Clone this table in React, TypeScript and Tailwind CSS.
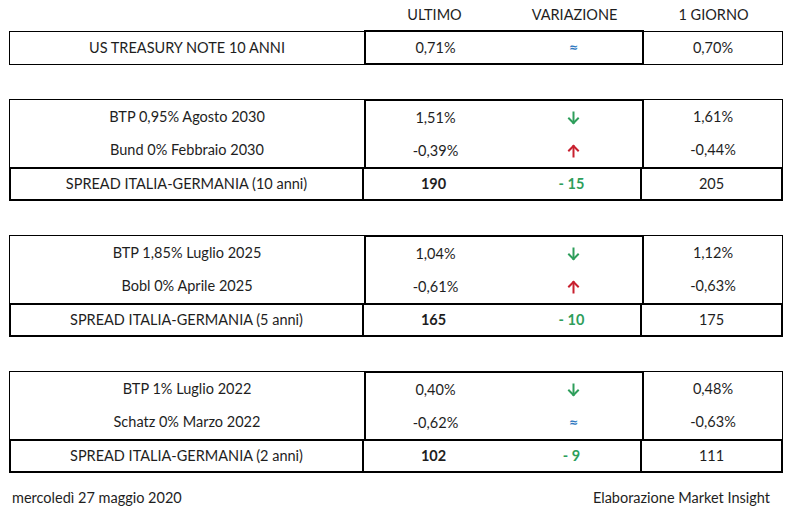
import React from "react";

type Row = { name: string; last: string; varType: "down" | "up" | "approx"; prev: string };
type Block = { rows: Row[]; spread: { name: string; last: string; delta: string; prev: string } };

const blocks: Block[] = [
  {
    rows: [
      { name: "BTP 0,95% Agosto 2030", last: "1,51%", varType: "down", prev: "1,61%" },
      { name: "Bund 0% Febbraio 2030", last: "-0,39%", varType: "up", prev: "-0,44%" },
    ],
    spread: { name: "SPREAD ITALIA-GERMANIA (10 anni)", last: "190", delta: "- 15", prev: "205" },
  },
  {
    rows: [
      { name: "BTP 1,85% Luglio 2025", last: "1,04%", varType: "down", prev: "1,12%" },
      { name: "Bobl 0% Aprile 2025", last: "-0,61%", varType: "up", prev: "-0,63%" },
    ],
    spread: { name: "SPREAD ITALIA-GERMANIA (5 anni)", last: "165", delta: "- 10", prev: "175" },
  },
  {
    rows: [
      { name: "BTP 1% Luglio 2022", last: "0,40%", varType: "down", prev: "0,48%" },
      { name: "Schatz 0% Marzo 2022", last: "-0,62%", varType: "approx", prev: "-0,63%" },
    ],
    spread: { name: "SPREAD ITALIA-GERMANIA (2 anni)", last: "102", delta: "- 9", prev: "111" },
  },
];

function Arrow({ dir }: { dir: "down" | "up" }) {
  const color = dir === "down" ? "#2e9e5b" : "#c8202f";
  return (
    <svg width="13" height="14" viewBox="0 0 13 14" fill="none">
      {dir === "down" ? (
        <g stroke={color} strokeWidth="2" strokeLinecap="square">
          <path d="M6.5 1.5 V12" />
          <path d="M2 7.5 L6.5 12 L11 7.5" />
        </g>
      ) : (
        <g stroke={color} strokeWidth="2" strokeLinecap="square">
          <path d="M6.5 2 V12.5" />
          <path d="M2 6.5 L6.5 2 L11 6.5" />
        </g>
      )}
    </svg>
  );
}

function Approx() {
  return (
    <span
      className="text-[11px] font-bold leading-none text-[#2f78c0]"
      style={{ fontFamily: "'DejaVu Sans', sans-serif" }}
    >
      ≈
    </span>
  );
}

function VarCell({ t }: { t: "down" | "up" | "approx" }) {
  if (t === "approx") return <Approx />;
  return <Arrow dir={t} />;
}

export default function App() {
  return (
    <div
      className="w-[794px] h-[508px] bg-white text-[#1e1e1e] text-[14.5px]"
      style={{ fontFamily: "Lato, 'Liberation Sans', sans-serif" }}
    >
      <div className="w-[783px] pl-[9px]">
        {/* header */}
        <div className="flex h-[30px] items-center">
          <div className="w-[355px]" />
          <div className="w-[141px] text-center">ULTIMO</div>
          <div className="w-[139px] text-center">VARIAZIONE</div>
          <div className="flex-1 text-center">1 GIORNO</div>
        </div>

        {/* US Treasury */}
        <div className="flex h-[35px]">
          <div className="mt-px flex h-[34px] w-[355px] items-center justify-center border-y border-l border-black">
            US TREASURY NOTE 10 ANNI
          </div>
          <div className="flex h-[35px] w-[280px] border-2 border-black">
            <div className="flex w-[139px] items-center justify-center">0,71%</div>
            <div className="flex flex-1 items-center justify-center">
              <Approx />
            </div>
          </div>
          <div className="mt-px flex h-[34px] flex-1 items-center justify-center border-y border-r border-black">
            0,70%
          </div>
        </div>

        {blocks.map((b, i) => (
          <div key={i} className="mt-[34px]">
            <div className="flex h-[68px]">
              <div className="flex w-[355px] flex-col border-l border-t border-black">
                {b.rows.map((r, j) => (
                  <div key={j} className="flex h-[33.5px] items-center justify-center">
                    {r.name}
                  </div>
                ))}
              </div>
              <div className="flex w-[280px] flex-col border-x-2 border-t-2 border-black">
                {b.rows.map((r, j) => (
                  <div key={j} className="flex h-[33px] items-center">
                    <div className="w-[139px] text-center">{r.last}</div>
                    <div className="flex flex-1 items-center justify-center">
                      <VarCell t={r.varType} />
                    </div>
                  </div>
                ))}
              </div>
              <div className="flex flex-1 flex-col border-r border-t border-black">
                {b.rows.map((r, j) => (
                  <div key={j} className="flex h-[33.5px] items-center justify-center">
                    {r.prev}
                  </div>
                ))}
              </div>
            </div>
            <div className="flex h-[34px] border-2 border-black">
              <div className="flex w-[353px] items-center justify-center border-r-2 border-black">
                {b.spread.name}
              </div>
              <div className="flex w-[139px] items-center justify-center font-bold">{b.spread.last}</div>
              <div className="flex w-[139px] items-center justify-center border-r-2 border-black font-bold text-[#2e9e5b]">
                {b.spread.delta}
              </div>
              <div className="flex flex-1 items-center justify-center">{b.spread.prev}</div>
            </div>
          </div>
        ))}

        {/* footer */}
        <div className="flex h-[48px] items-center justify-between pl-[3px] pr-[13px] pt-[1px]">
          <span>mercoledì 27 maggio 2020</span>
          <span>Elaborazione Market Insight</span>
        </div>
      </div>
    </div>
  );
}
